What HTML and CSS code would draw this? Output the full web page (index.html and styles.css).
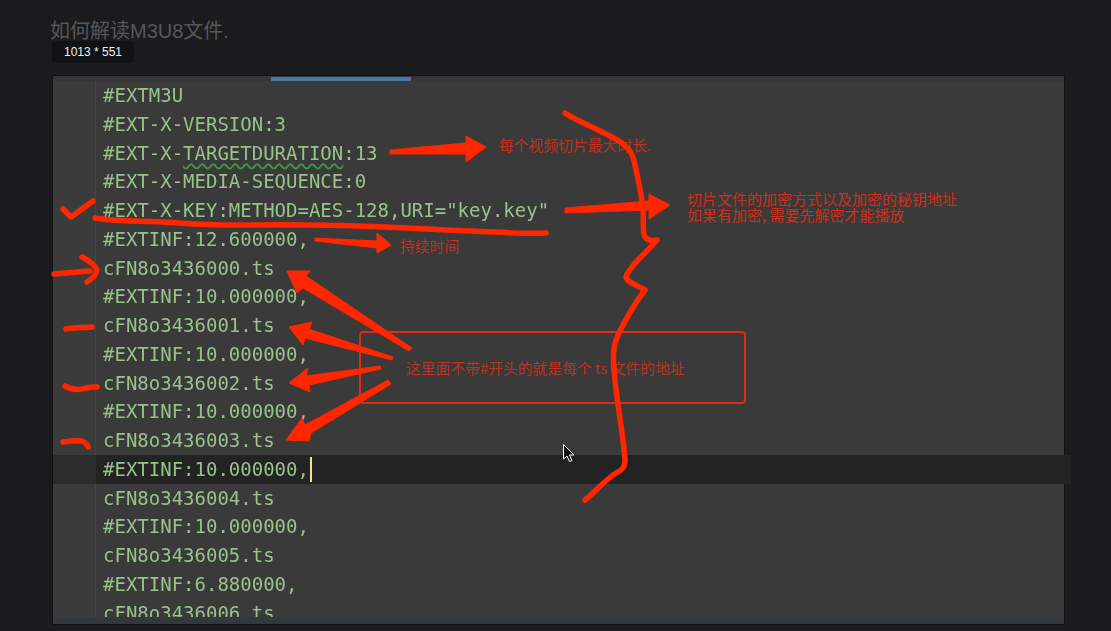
FILE: index.html
```html
<!DOCTYPE html>
<html lang="zh">
<head>
<meta charset="utf-8">
<title>如何解读M3U8文件</title>
<link rel="stylesheet" href="styles.css">
</head>
<body>
<div class="page">
  <header class="header">
    <h1 class="title">如何解读M3U8文件.</h1>
    <span class="size-tip">1013 * 551</span>
  </header>
  <main class="panel">
    <div class="tabs"><span class="tab-active"></span></div>
    <div class="editor">
      <div class="gutter"></div>
      <div class="code">
        <div class="line">#EXTM3U</div>
        <div class="line">#EXT-X-VERSION:3</div>
        <div class="line">#EXT-X-<span class="warn">TARGETDURATION</span>:13</div>
        <div class="line">#EXT-X-MEDIA-SEQUENCE:0</div>
        <div class="line">#EXT-X-KEY:METHOD=AES-128,URI="key.key"</div>
        <div class="line">#EXTINF:12.600000,</div>
        <div class="line">cFN8o3436000.ts</div>
        <div class="line">#EXTINF:10.000000,</div>
        <div class="line">cFN8o3436001.ts</div>
        <div class="line">#EXTINF:10.000000,</div>
        <div class="line">cFN8o3436002.ts</div>
        <div class="line">#EXTINF:10.000000,</div>
        <div class="line">cFN8o3436003.ts</div>
        <div class="line line-current">#EXTINF:10.000000,<span class="caret"></span></div>
        <div class="line">cFN8o3436004.ts</div>
        <div class="line">#EXTINF:10.000000,</div>
        <div class="line">cFN8o3436005.ts</div>
        <div class="line">#EXTINF:6.880000,</div>
        <div class="line">cFN8o3436006.ts</div>
      </div>
    </div>
    <div class="status"></div>
  </main>
  <div class="note note-max">每个视频切片最大时长.</div>
  <div class="note note-key">切片文件的加密方式以及加密的秘钥地址<br>如果有加密, 需要先解密才能播放</div>
  <div class="note note-dur">持续时间</div>
  <div class="note-box"></div>
  <div class="note note-ts">这里面不带#开头的就是每个 ts 文件的地址</div>
  <svg class="ink" viewBox="0 0 1111 631" width="1111" height="631" aria-hidden="true">
    <g class="fill">
      <polygon points="390,150 466,143 466,136 486,147 466,162 466,154 390,154"/>
      <polygon points="565,208 649,201 649,194 670,205 649,219 649,210 565,213"/>
      <polygon points="315,238 377,241 377,233 391,245 377,253 377,248 315,241"/>
      <polygon points="287,271 310,271 306,276 412,348 409,351 303,288 297,293"/>
      <polygon points="289,327 312,322 309,329 393,357 392,360 305,338 303,345"/>
      <polygon points="289,383 308,368 306,376 380,366 381,369 309,385 310,392"/>
      <polygon points="286,440 302,418 305,425 388,380 391,384 311,433 309,441"/>
    </g>
    <g class="stroke">
      <path d="M63 209 L71 217 L93 201"/>
      <path d="M95 218 C120 222 150 221 180 223 C230 227 250 224 300 225 C370 225 420 229 470 231 C500 232 520 234 546 233"/>
      <path d="M54 274 C65 273 78 272 90 271"/>
      <path d="M82 257 C90 261 95 265 97 270 C96 275 92 279 87 282"/>
      <path d="M66 329 C75 327 84 328 92 327"/>
      <path d="M65 386 C72 390 80 390 86 388 C90 387 94 387 97 387"/>
      <path d="M63 442 C70 441 76 440 82 441 C85 442 87 444 88 447"/>
      <path d="M565 113 C575 120 600 130 619 141 C630 148 633 155 635 165 C638 180 642 195 643 210 C644 220 642 232 645 237 C648 241 652 241 657 240 C650 248 645 253 638 260 C632 267 627 272 626 277 C627 283 638 285 645 290 C635 303 622 325 616 340 C612 352 613 365 615 380 C618 410 624 440 625 460 C625 468 622 470 616 473 C605 480 595 492 585 500"/>
    </g>
    <path class="pointer" d="M563.5 444.5 V459 L567 456 L569.5 461.5 L572 460.5 L569.5 455 L574 455 Z"/>
  </svg>
</div>
</body>
</html>
```

FILE: styles.css
```css
* { box-sizing: border-box; }

html, body {
  margin: 0;
  height: 100%;
  background: #1a1b1d;
  overflow: hidden;
}

.page {
  position: relative;
  width: 1111px;
  height: 631px;
  display: flex;
  flex-direction: column;
  padding-left: 52px;
  padding-right: 46px;
  padding-bottom: 6px;
  font-family: "Liberation Sans", "Noto Sans CJK SC", sans-serif;
}

.header {
  height: 75px;
  flex: none;
  padding-top: 19px;
}

.title {
  margin: 0 0 0 -2px;
  font-size: 20px;
  line-height: 24px;
  font-weight: 400;
  color: #55575a;
  font-family: "Liberation Sans", "Noto Sans CJK SC", sans-serif;
}

.size-tip {
  position: absolute;
  left: 52px;
  top: 41px;
  width: 82px;
  height: 22px;
  border-radius: 4px;
  background: #111214;
  color: #f0f0f0;
  font-size: 12px;
  line-height: 23px;
  text-align: center;
}

.panel {
  flex: 1;
  min-height: 0;
  display: flex;
  flex-direction: column;
  background: #3a3a3a;
  border: 1px solid #111213;
}

.tabs {
  flex: none;
  height: 5px;
  padding-left: 218px;
  padding-top: 1px;
  background: #34373a;
}

.tab-active {
  display: block;
  width: 140px;
  height: 4px;
  background: #4a76a8;
}

.editor {
  flex: 1;
  min-height: 0;
  display: flex;
}

.gutter {
  flex: none;
  width: 43px;
  background: #3b3b3b;
  border-right: 1px solid #444545;
}

.code {
  flex: 1;
  min-width: 0;
  padding-left: 7px;
  overflow-x: visible;
  overflow-y: clip;
  font-family: "DejaVu Sans Mono", monospace;
  font-size: 19px;
  color: #98c28a;
  filter: blur(0.3px);
}

.line {
  position: relative;
  height: 28.75px;
  line-height: 28.75px;
  white-space: pre;
}

.line-current::before {
  content: "";
  position: absolute;
  z-index: -1;
  left: -50px;
  right: -7px;
  top: 0;
  bottom: 0;
  background: linear-gradient(to right, #2c2c2c 0 43px, #232323 43px);
}

.warn {
  text-decoration: underline wavy #3f9a3f 1.5px;
  text-underline-offset: 3px;
}

.caret {
  display: inline-block;
  width: 2.5px;
  height: 25px;
  margin-left: 1px;
  vertical-align: -6px;
  background: #f2e48c;
}

.status {
  flex: none;
  height: 7px;
  background: #33383d;
}

.note {
  position: absolute;
  color: #bd3220;
  font-size: 14.8px;
  line-height: 16px;
  white-space: nowrap;
  font-family: "Noto Sans CJK SC", sans-serif;
}

.note-max { left: 499px; top: 137px; }
.note-key { left: 687px; top: 191px; font-size: 15px; color: #cf2f19; }
.note-dur { left: 400px; top: 238px; }
.note-ts { left: 406px; top: 360px; }

.note-box {
  position: absolute;
  left: 359px;
  top: 331px;
  width: 387px;
  height: 73px;
  border: 2px solid #dc2c14;
  border-radius: 4px;
}

.ink {
  position: absolute;
  left: 0;
  top: 0;
}

.fill polygon {
  fill: #ff2600;
  stroke: #ff2600;
  stroke-width: 1;
  stroke-linejoin: round;
}

.stroke path {
  fill: none;
  stroke: #ff2600;
  stroke-width: 5.5;
  stroke-linecap: round;
  stroke-linejoin: round;
}

.pointer {
  fill: #111;
  stroke: #fff;
  stroke-width: 1;
}
```
